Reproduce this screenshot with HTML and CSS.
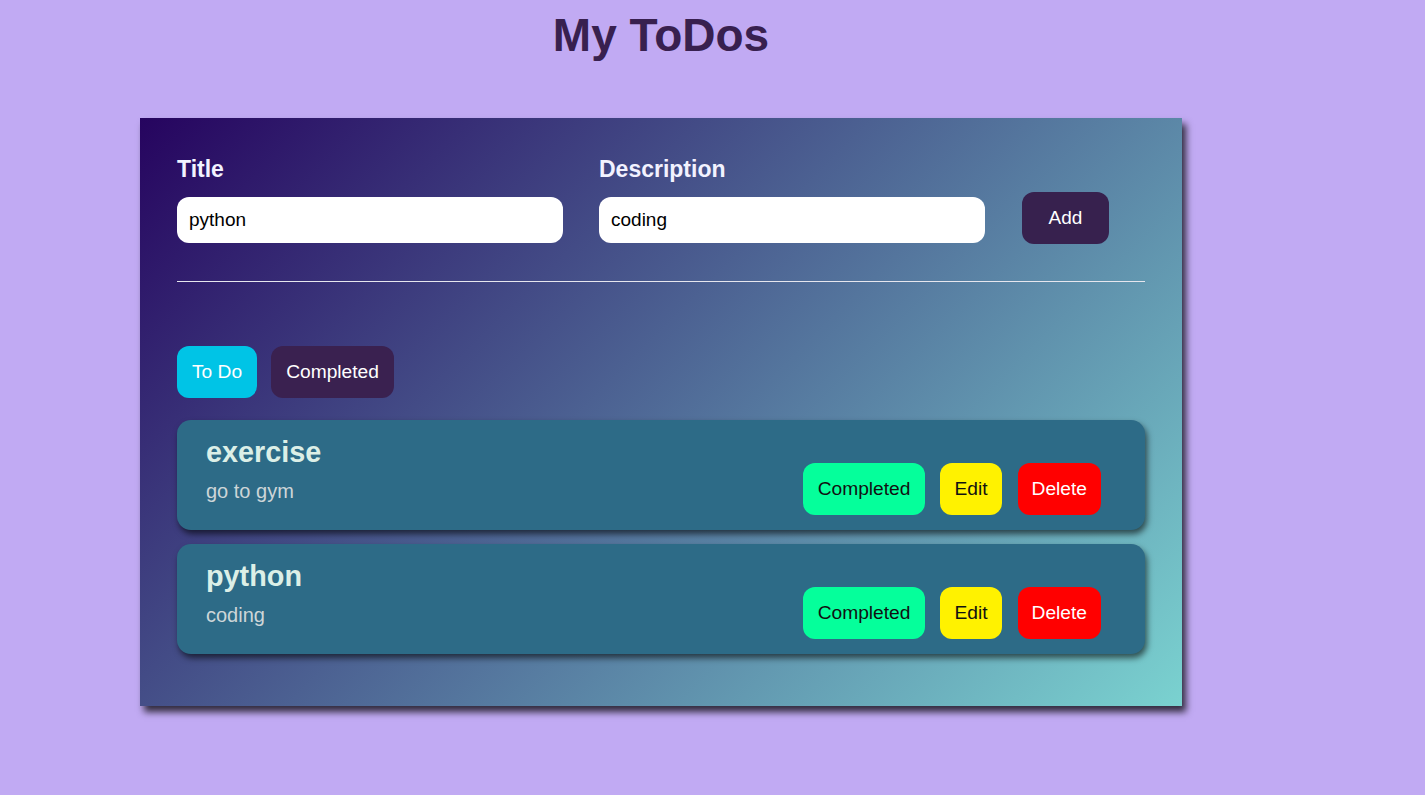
FILE: index.html
```html
<!DOCTYPE html>
<html lang="en">
<head>
<meta charset="utf-8">
<title>My ToDos</title>
<link rel="stylesheet" href="styles.css">
</head>
<body>
<div class="app">
  <h1 class="app-title">My ToDos</h1>
  <div class="todo-wrapper">
    <div class="todo-input">
      <div class="todo-input-item">
        <label class="todo-label">Title</label>
        <input class="todo-field" type="text" value="python">
      </div>
      <div class="todo-input-item">
        <label class="todo-label">Description</label>
        <input class="todo-field" type="text" value="coding">
      </div>
      <div class="todo-input-action">
        <button class="btn btn-add" type="button">Add</button>
      </div>
    </div>
    <hr class="divider">
    <div class="tabs">
      <button class="btn tab tab-active" type="button">To Do</button>
      <button class="btn tab" type="button">Completed</button>
    </div>
    <div class="todo-list">
      <div class="todo-item">
        <div class="todo-text">
          <h3 class="todo-title">exercise</h3>
          <p class="todo-desc">go to gym</p>
        </div>
        <div class="todo-actions">
          <button class="btn btn-complete" type="button">Completed</button>
          <button class="btn btn-edit" type="button">Edit</button>
          <button class="btn btn-delete" type="button">Delete</button>
        </div>
      </div>
      <div class="todo-item">
        <div class="todo-text">
          <h3 class="todo-title">python</h3>
          <p class="todo-desc">coding</p>
        </div>
        <div class="todo-actions">
          <button class="btn btn-complete" type="button">Completed</button>
          <button class="btn btn-edit" type="button">Edit</button>
          <button class="btn btn-delete" type="button">Delete</button>
        </div>
      </div>
    </div>
  </div>
</div>
</body>
</html>
```
FILE: styles.css
```css
* { box-sizing: border-box; }

html {
  background: #c1aaf3;
}

body {
  margin: 0;
  padding-bottom: 40px;
  background: #c1aaf3;
  font-family: "Liberation Sans", Arial, sans-serif;
}

.app {
  width: 1042px;
  margin-left: 140px;
}

.app-title {
  margin: 9px 0 0;
  font-size: 46px;
  line-height: 53px;
  font-weight: 700;
  text-align: center;
  color: #38204f;
}

.todo-wrapper {
  margin-top: 56px;
  padding: 38px 37px 52px;
  background: linear-gradient(135deg, #26045f, #7ad2d0);
  box-shadow: 4px 6px 7px rgba(0, 0, 0, 0.75);
}

.todo-input {
  display: flex;
  align-items: flex-end;
}

.todo-input-item {
  display: flex;
  flex-direction: column;
  width: 386px;
  margin-right: 36px;
}

.todo-label {
  font-size: 23px;
  line-height: 26px;
  font-weight: 700;
  color: #f2f2ff;
  margin-bottom: 15px;
}

.todo-field {
  height: 46px;
  border: none;
  border-radius: 12px;
  padding: 0 12px;
  font-family: inherit;
  font-size: 19px;
  color: #000;
  background: #fff;
  outline: none;
}

.todo-input-action {
  margin-left: 1px;
  margin-bottom: -1px;
}

.btn {
  height: 52px;
  border: none;
  border-radius: 12px;
  padding: 0 15px;
  font-family: inherit;
  font-size: 19.2px;
  cursor: pointer;
}

.btn-add {
  width: 87px;
  background: #37214e;
  color: #fff;
  font-size: 19px;
}

.divider {
  margin: 38px 0 0;
  border: none;
  border-top: 1px solid #e6e6ee;
  height: 0;
}

.tabs {
  display: flex;
  gap: 14px;
  margin-top: 64px;
}

.tab {
  background: #3a2150;
  color: #fff;
}

.tab-active {
  background: #00c4e6;
}

.todo-list {
  display: flex;
  flex-direction: column;
  gap: 14px;
  margin-top: 22px;
}

.todo-item {
  display: flex;
  justify-content: space-between;
  align-items: flex-end;
  height: 110px;
  padding: 16px 44px 15px 29px;
  background: #2d6b87;
  border-radius: 14px;
  box-shadow: 2px 4px 6px rgba(0, 0, 0, 0.6);
}

.todo-text {
  align-self: flex-start;
}

.todo-title {
  margin: 0;
  font-size: 28.8px;
  line-height: 33px;
  font-weight: 700;
  color: #dcefe7;
}

.todo-desc {
  margin: 11px 0 0;
  font-size: 20px;
  line-height: 23px;
  color: #cdd6d8;
}

.todo-actions {
  display: flex;
  gap: 15px;
}

.btn-complete {
  background: #05ff9b;
  color: #111;
}

.btn-edit {
  padding: 0 14px;
  background: #fff200;
  color: #111;
}

.btn-delete {
  margin-left: 1px;
  padding: 0 14px;
  background: #ff0000;
  color: #fff;
}
```
